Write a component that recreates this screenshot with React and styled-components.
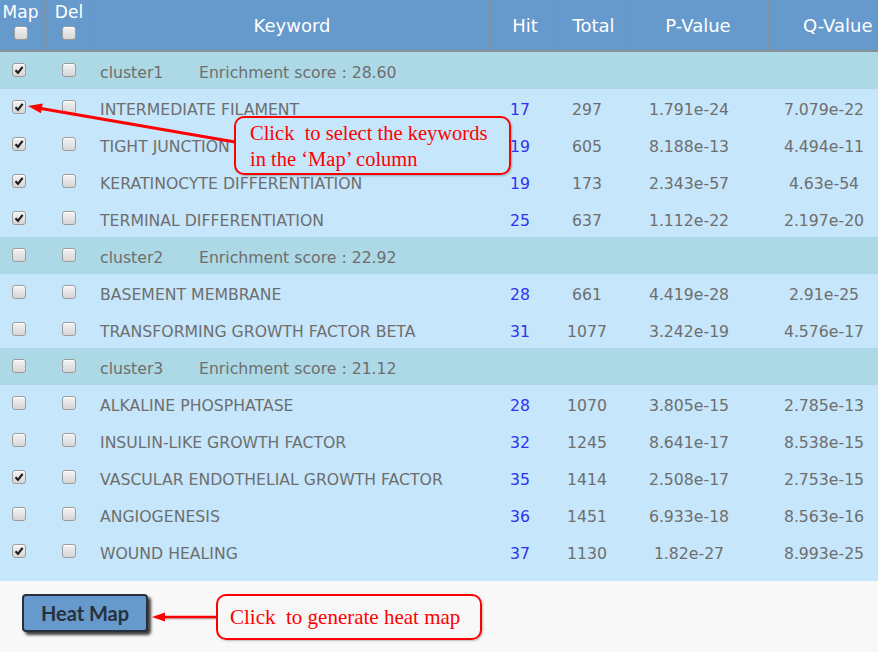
import React from 'react';
import styled, { createGlobalStyle } from 'styled-components';

const GlobalStyle = createGlobalStyle`
  html, body {
    margin: 0;
    padding: 0;
    background: #f8f8f8;
  }
`;

const Page = styled.div`
  position: relative;
  width: 878px;
  height: 652px;
  overflow: hidden;
  background: #f8f8f8;
  font-family: "DejaVu Sans", Verdana, sans-serif;
`;

const Table = styled.div`
  width: 889px;
  background: #c6e6fb;
  padding-bottom: 11px;
`;

const HeaderRow = styled.div`
  display: grid;
  grid-template-columns: 45px 49px 397px 69px 68px 141px 130px;
  height: 50px;
  background: #6699cc;
  border-bottom: 2px solid #8a8f96;
`;

const HeadCell = styled.div`
  display: flex;
  align-items: center;
  justify-content: ${(p) => (p.$left ? 'flex-start' : 'center')};
  padding-left: ${(p) => p.$pad || 0}px;
  border-right: 1px solid #85919e;
  color: #fff;
  font-size: 18px;
  &:last-child {
    border-right: none;
  }
`;

const CheckHead = styled.div`
  display: flex;
  flex-direction: column;
  align-items: center;
  padding-top: 2px;
  padding-right: ${(p) => p.$shift || 0}px;
  border-right: 1px solid #85919e;
  color: #fff;
  font-size: 17px;
  line-height: 20px;

  span {
    margin-top: 4px;
  }
`;

const Row = styled.div`
  display: grid;
  grid-template-columns: 37px 63px 385px 70px 64px 140px 130px;
  height: 37px;
  align-items: center;
  background: ${(p) => (p.$cluster ? '#add8e6' : '#c6e6fb')};
  color: #6e6e6e;
  font-size: 15.7px;
`;

const BoxCell = styled.div`
  display: flex;
  justify-content: center;
  margin-top: -2px;
`;

const Keyword = styled.div`
  padding-top: 4px;
  white-space: nowrap;
`;

const ClusterName = styled.span`
  display: inline-block;
  width: 99px;
`;

const Num = styled.div`
  padding-top: 4px;
  text-align: center;
  color: ${(p) => (p.$link ? '#3131f2' : '#6e6e6e')};
`;

const Box = styled.span`
  display: inline-flex;
  align-items: center;
  justify-content: center;
  box-sizing: border-box;
  width: 14px;
  height: 14px;
  border: 1px solid #9c9c9c;
  border-radius: 3px;
  background: linear-gradient(#f3f3f3, #d6d6d6);
  box-shadow: inset 0 1px 0 #fff;
`;

const Footer = styled.div`
  padding: 13px 0 0 22px;
`;

const HeatButton = styled.button`
  box-sizing: border-box;
  width: 126px;
  height: 38px;
  background: #6699cc;
  border: 2px solid #26313d;
  border-radius: 4px;
  box-shadow: 3px 3px 3px rgba(0, 0, 0, 0.75);
  color: #28303b;
  font-family: Lato, "Open Sans", sans-serif;
  font-weight: 700;
  font-size: 20px;
  padding: 0;
`;

const Callout = styled.div`
  position: absolute;
  left: ${(p) => p.$x}px;
  top: ${(p) => p.$y}px;
  width: ${(p) => p.$w}px;
  height: ${(p) => p.$h}px;
  box-sizing: border-box;
  border: 2.5px solid #ff0000;
  border-radius: 10px;
  padding: ${(p) => p.$pad};
  color: #ff0000;
  font-family: "Liberation Serif", "Times New Roman", serif;
  font-size: 20.5px;
  line-height: 26px;
  white-space: pre;
  box-shadow: 1px 1px 2px rgba(0, 0, 0, 0.25);
`;

const Overlay = styled.svg`
  position: absolute;
  left: 0;
  top: 0;
  pointer-events: none;
`;

const Check = ({ on }) => (
  <Box>
    {on && (
      <svg width="10" height="10" viewBox="0 0 10 10">
        <path d="M1.5 5.2 L4 7.8 L8.6 1.8" fill="none" stroke="#1e1e1e" strokeWidth="2.2" />
      </svg>
    )}
  </Box>
);

const rows = [
  { cluster: 'cluster1', score: '28.60', map: true },
  { k: 'INTERMEDIATE FILAMENT', hit: 17, total: 297, p: '1.791e-24', q: '7.079e-22', map: true },
  { k: 'TIGHT JUNCTION', hit: 19, total: 605, p: '8.188e-13', q: '4.494e-11', map: true },
  { k: 'KERATINOCYTE DIFFERENTIATION', hit: 19, total: 173, p: '2.343e-57', q: '4.63e-54', map: true },
  { k: 'TERMINAL DIFFERENTIATION', hit: 25, total: 637, p: '1.112e-22', q: '2.197e-20', map: true },
  { cluster: 'cluster2', score: '22.92' },
  { k: 'BASEMENT MEMBRANE', hit: 28, total: 661, p: '4.419e-28', q: '2.91e-25' },
  { k: 'TRANSFORMING GROWTH FACTOR BETA', hit: 31, total: 1077, p: '3.242e-19', q: '4.576e-17' },
  { cluster: 'cluster3', score: '21.12' },
  { k: 'ALKALINE PHOSPHATASE', hit: 28, total: 1070, p: '3.805e-15', q: '2.785e-13' },
  { k: 'INSULIN-LIKE GROWTH FACTOR', hit: 32, total: 1245, p: '8.641e-17', q: '8.538e-15' },
  { k: 'VASCULAR ENDOTHELIAL GROWTH FACTOR', hit: 35, total: 1414, p: '2.508e-17', q: '2.753e-15', map: true },
  { k: 'ANGIOGENESIS', hit: 36, total: 1451, p: '6.933e-18', q: '8.563e-16' },
  { k: 'WOUND HEALING', hit: 37, total: 1130, p: '1.82e-27', q: '8.993e-25', map: true },
];

export default function App() {
  return (
    <Page>
      <GlobalStyle />
      <Table>
        <HeaderRow>
          <CheckHead $shift={3}>
            Map
            <Check />
          </CheckHead>
          <CheckHead>
            Del
            <Check />
          </CheckHead>
          <HeadCell>Keyword</HeadCell>
          <HeadCell>Hit</HeadCell>
          <HeadCell>Total</HeadCell>
          <HeadCell>P-Value</HeadCell>
          <HeadCell $left $pad={34}>Q-Value</HeadCell>
        </HeaderRow>
        {rows.map((r, i) => (
          <Row key={i} $cluster={!!r.cluster}>
            <BoxCell>
              <Check on={r.map} />
            </BoxCell>
            <BoxCell>
              <Check />
            </BoxCell>
            {r.cluster ? (
              <Keyword>
                <ClusterName>{r.cluster}</ClusterName>
                Enrichment score : {r.score}
              </Keyword>
            ) : (
              <>
                <Keyword>{r.k}</Keyword>
                <Num $link>{r.hit}</Num>
                <Num>{r.total}</Num>
                <Num>{r.p}</Num>
                <Num>{r.q}</Num>
              </>
            )}
          </Row>
        ))}
      </Table>
      <Footer>
        <HeatButton>Heat Map</HeatButton>
      </Footer>

      <Callout $x={234} $y={116} $w={277} $h={59} $pad="2px 0 0 14px">
        {'Click  to select the keywords\nin the ‘Map’ column'}
      </Callout>
      <Callout $x={216} $y={594} $w={266} $h={46} $pad="8px 0 0 12px" style={{ fontSize: '21px' }}>
        {'Click  to generate heat map'}
      </Callout>

      <Overlay width="878" height="652" viewBox="0 0 878 652">
        <line x1="235" y1="142" x2="41" y2="108.4" stroke="#ff0000" strokeWidth="3" />
        <polygon points="28,106 40.9,113.3 42.7,103.5" fill="#ff0000" />
        <line x1="216" y1="618.5" x2="164" y2="618.5" stroke="#9a9a9a" strokeWidth="2" opacity="0.6" />
        <line x1="216" y1="617" x2="163" y2="617" stroke="#ff0000" strokeWidth="2.5" />
        <polygon points="152,617 165,612.5 165,621.5" fill="#ff0000" />
      </Overlay>
    </Page>
  );
}
